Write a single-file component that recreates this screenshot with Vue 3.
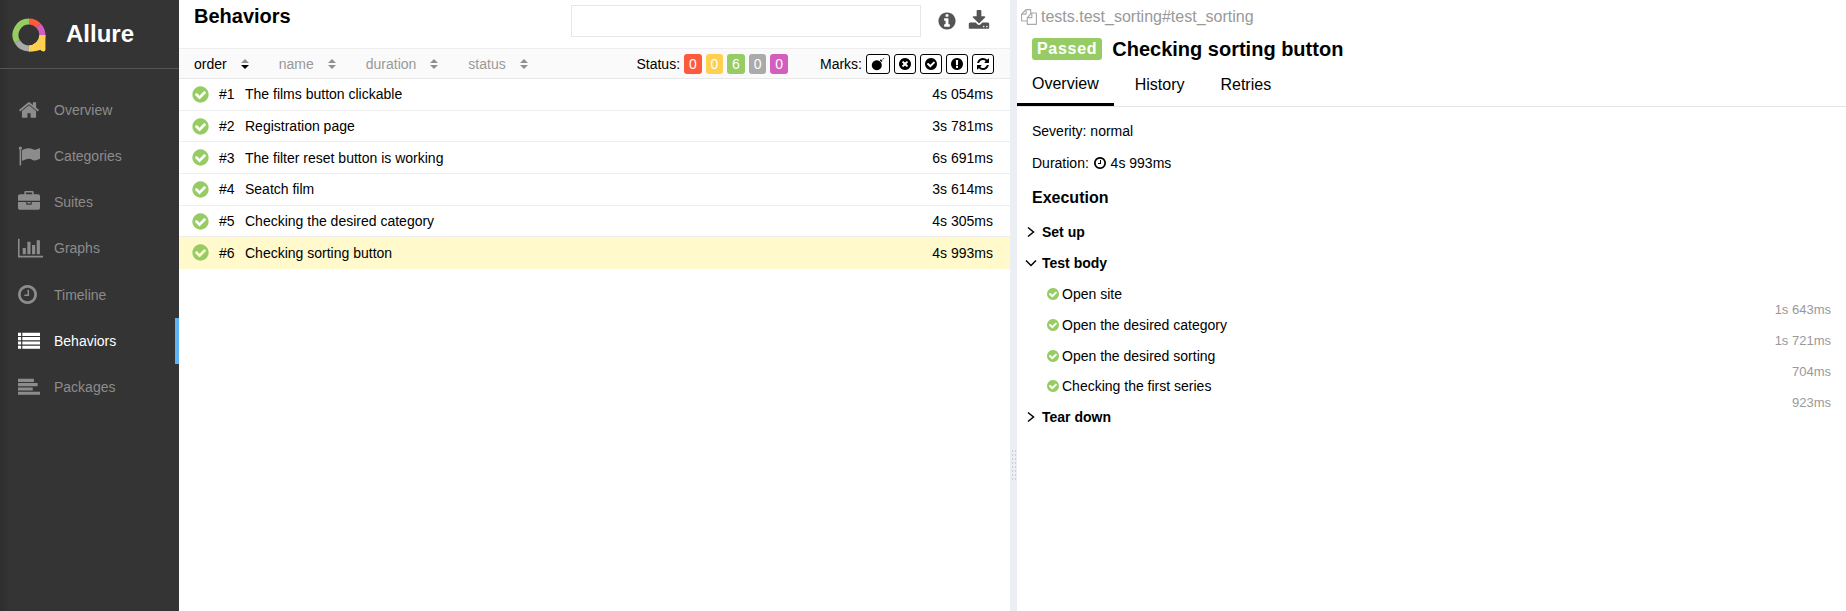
<template>
  <div class="app">
    <aside class="sidebar">
      <div class="brand">
        <svg class="logo" viewBox="0 0 36 36" width="34" height="34">
          <g fill="none" stroke-width="6.4">
            <path d="M18 3.800A14.200 14.200 0 0 1 28 8" stroke="#fd5a3e" />
            <path d="M28 8A14.200 14.200 0 0 1 32.200 18" stroke="#d35ebe" />
            <path d="M32.200 18A14.200 14.200 0 0 1 18 32.200" stroke="#ffd050" />
            <path d="M18 32.200A14.200 14.200 0 0 1 5.500 25" stroke="#aaa" />
            <path d="M5.500 25A14.200 14.200 0 0 1 18 3.800" stroke="#97cc64" />
          </g>
          <path d="M35.400 18V33.500Q35.400 35.400 33.500 35.400Q31 35.400 30 33.500Q26 35.400 18 35.400V29A11 11 0 0 0 29 18Z" fill="#ffd050" />
        </svg>
        <span class="brand-name">Allure</span>
      </div>
      <nav class="nav">
        <a v-for="item in navItems" :key="item.label" class="nav-item" :class="{ active: item.active }">
          <span class="nav-icon">
            <svg :viewBox="item.box" :width="item.w" :height="item.h" fill="currentColor">
              <path :d="item.path" />
            </svg>
          </span>
          <span>{{ item.label }}</span>
        </a>
      </nav>
    </aside>

    <main class="list-pane">
      <header class="list-head">
        <h2>Behaviors</h2>
        <div class="search"></div>
        <svg class="head-icon info" viewBox="0 0 1792 1792" width="20" height="20" fill="#555">
          <path :d="icons.info" />
        </svg>
        <svg class="head-icon" viewBox="0 0 1792 1792" width="22" height="22" fill="#555">
          <path :d="icons.download" />
        </svg>
      </header>

      <div class="toolbar">
        <div class="sorters">
          <span v-for="s in sorters" :key="s.label" class="sorter" :class="{ current: s.current }">
            {{ s.label }}
            <span class="arrows">
              <i class="up"></i>
              <i class="down"></i>
            </span>
          </span>
        </div>
        <div class="filters">
          <span class="filter-label">Status:</span>
          <span v-for="(b, i) in statuses" :key="i" class="count" :style="{ background: b.color }">{{ b.n }}</span>
          <span class="filter-label marks">Marks:</span>
          <span v-for="(m, i) in marks" :key="i" class="mark" :class="{ wide: i === 0 }">
            <svg viewBox="0 0 1792 1792" width="14" height="14" fill="#000">
              <path :d="m" />
            </svg>
          </span>
        </div>
      </div>

      <div
        v-for="row in rows"
        :key="row.order"
        class="row"
        :class="{ selected: row.order === 6 }"
      >
        <svg viewBox="0 0 1792 1792" width="19" height="19" fill="#97cc64">
          <path :d="icons.check" />
        </svg>
        <span class="row-order">#{{ row.order }}</span>
        <span class="row-name">{{ row.name }}</span>
        <span class="row-time">{{ row.time }}</span>
      </div>
    </main>

    <div class="divider">
      <span class="grip"></span>
    </div>

    <section class="detail">
      <div class="path">
        <svg viewBox="0 0 1792 1792" width="16" height="16" fill="#aaa">
          <path :d="icons.files" />
        </svg>
        <span>tests.test_sorting#test_sorting</span>
      </div>
      <div class="title">
        <span class="passed">Passed</span>
        <span>Checking sorting button</span>
      </div>
      <div class="tabs">
        <span class="tab on">Overview</span>
        <span class="tab">History</span>
        <span class="tab">Retries</span>
      </div>
      <div class="body">
        <p class="meta">Severity: normal</p>
        <p class="meta dur">
          Duration:
          <svg viewBox="0 0 1792 1792" width="14" height="14" fill="#000">
            <path :d="icons.clock" />
          </svg>
          4s 993ms
        </p>
        <h3>Execution</h3>

        <div class="stage">
          <span class="chev-box">
            <svg class="chev" viewBox="0 0 10 12" width="10" height="12"><path d="M3 1.500L8.500 6L3 10.500" /></svg>
          </span>
          Set up
        </div>
        <div class="stage">
          <span class="chev-box">
            <svg class="chev" viewBox="0 0 12 10" width="12" height="10"><path d="M1 2.500L6 7.500L11 2.500" /></svg>
          </span>
          Test body
        </div>
        <div class="steps">
          <div class="step-names">
            <div v-for="s in steps" :key="s.name" class="step">
              <svg viewBox="0 0 1792 1792" width="14" height="14" fill="#97cc64">
                <path :d="icons.check" />
              </svg>
              {{ s.name }}
            </div>
          </div>
          <div class="step-times">
            <div v-for="s in steps" :key="s.name" class="step-time">{{ s.time }}</div>
          </div>
        </div>
        <div class="stage">
          <span class="chev-box">
            <svg class="chev" viewBox="0 0 10 12" width="10" height="12"><path d="M3 1.500L8.500 6L3 10.500" /></svg>
          </span>
          Tear down
        </div>
      </div>
    </section>
  </div>
</template>

<script setup>
const icons = {
  check: "M1412 734q0-28-18-46l-91-90q-19-19-45-19t-45 19l-408 407-226-226q-19-19-45-19t-45 19l-91 90q-18 18-18 46 0 27 18 45l362 362q19 19 45 19 27 0 46-19l543-543q18-18 18-45zm252 162q0 209-103 385.500t-279.500 279.500-385.500 103-385.500-103-279.500-279.500-103-385.500 103-385.500 279.500-279.500 385.500-103 385.500 103 279.500 279.500 103 385.500z",
  info: "M1152 1376v-160q0-14-9-23t-23-9h-96v-512q0-14-9-23t-23-9h-320q-14 0-23 9t-9 23v160q0 14 9 23t23 9h96v320h-96q-14 0-23 9t-9 23v160q0 14 9 23t23 9h448q14 0 23-9t9-23zm-128-896v-160q0-14-9-23t-23-9h-192q-14 0-23 9t-9 23v160q0 14 9 23t23 9h192q14 0 23-9t9-23zm640 416q0 209-103 385.500t-279.500 279.500-385.500 103-385.500-103-279.500-279.500-103-385.500 103-385.500 279.500-279.500 385.500-103 385.500 103 279.500 279.500 103 385.500z",
  download: "M1344 1344q0-26-19-45t-45-19-45 19-19 45 19 45 45 19 45-19 19-45zm256 0q0-26-19-45t-45-19-45 19-19 45 19 45 45 19 45-19 19-45zm128-224v320q0 40-28 68t-68 28h-1472q-40 0-68-28t-28-68v-320q0-40 28-68t68-28h465l135 136q58 56 136 56t136-56l136-136h464q40 0 68 28t28 68zm-325-569q17 41-14 70l-448 448q-18 19-45 19t-45-19l-448-448q-31-29-14-70 17-39 59-39h256v-448q0-26 19-45t45-19h256q26 0 45 19t19 45v448h256q42 0 59 39z",
  clock: "M1024 544v448q0 14-9 23t-23 9h-320q-14 0-23-9t-9-23v-64q0-14 9-23t23-9h224v-352q0-14 9-23t23-9h64q14 0 23 9t9 23zm416 352q0-148-73-273t-198-198-273-73-273 73-198 198-73 273 73 273 198 198 273 73 273-73 198-198 73-273zm224 0q0 209-103 385.500t-279.500 279.500-385.500 103-385.500-103-279.500-279.500-103-385.500 103-385.500 279.500-279.500 385.500-103 385.500 103 279.500 279.500 103 385.500z",
  files: "M1696 384q40 0 68 28t28 68v1216q0 40-28 68t-68 28h-960q-40 0-68-28t-28-68v-288h-544q-40 0-68-28t-28-68v-672q0-40 20-88t48-76l408-408q28-28 76-48t88-20h416q40 0 68 28t28 68v328q68-40 128-40h416zm-544 213l-299 299h299v-299zm-640-384l-299 299h299v-299zm196 647l316-316v-416h-384v416q0 40-28 68t-68 28h-416v640h512v-256q0-40 20-88t48-76zm956 804v-1152h-384v416q0 40-28 68t-68 28h-416v640h896z",
};

const navItems = [
  { label: "Overview", box: "0 0 1792 1792", w: 22, h: 24, path: "M1472 992v480q0 26-19 45t-45 19h-384v-384h-256v384h-384q-26 0-45-19t-19-45v-480q0-1 .5-3t.5-3l575-474 575 474q1 2 1 6zm223-69l-62 74q-8 9-21 11h-3q-13 0-21-7l-692-577-692 577q-12 8-24 7-13-2-21-11l-62-74q-8-10-7-23.500t11-21.500l719-599q32-26 76-26t76 26l244 204v-195q0-14 9-23t23-9h192q14 0 23 9t9 23v408l219 182q10 8 11 21.500t-7 23.500z" },
  { label: "Categories", box: "0 0 1792 1792", w: 22, h: 24, path: "M320 256q0 72-64 110v1266q0 13-9.500 22.500t-22.500 9.500h-64q-13 0-22.500-9.500t-9.500-22.500v-1266q-64-38-64-110 0-53 37.500-90.500t90.500-37.500 90.500 37.500 37.500 90.500zm1472 64v763q0 25-12.500 38.500t-39.500 27.500q-215 116-369 116-61 0-123.500-22t-108.500-48-115.500-48-142.500-22q-192 0-464 146-17 9-33 9-26 0-45-19t-19-45v-742q0-32 31-55 21-14 79-43 236-120 421-120 107 0 200 29t219 88q38 19 88 19 54 0 117.500-21t110-47 88-47 54.500-21q26 0 45 19t19 45z" },
  { label: "Suites", box: "0 0 1792 1792", w: 22, h: 24, path: "M640 256h512v-128h-512v128zm1152 640v480q0 66-47 113t-113 47h-1472q-66 0-113-47t-47-113v-480h672v160q0 26 19 45t45 19h320q26 0 45-19t19-45v-160h672zm-768 0v128h-256v-128h256zm768-480v384h-1792v-384q0-66 47-113t113-47h352v-160q0-40 28-68t68-28h576q40 0 68 28t28 68v160h352q66 0 113 47t47 113z" },
  { label: "Graphs", box: "0 0 2048 1792", w: 25, h: 22, path: "M640 896v512h-256v-512h256zm384-512v1024h-256v-1024h256zm1024 1152v128h-2048v-1536h128v1408h1920zm-640-896v768h-256v-768h256zm384-384v1152h-256v-1152h256z" },
  { label: "Timeline", box: "128 128 1536 1536", w: 19, h: 19, path: icons.clock },
  { label: "Behaviors", active: true, box: "0 0 1792 1792", w: 22, h: 24, path: "M0 224h256v256H0zM352 224h1440v256H352zM0 576h256v256H0zM352 576h1440v256H352zM0 928h256v256H0zM352 928h1440v256H352zM0 1280h256v256H0zM352 1280h1440v256H352z" },
  { label: "Packages", box: "0 0 1792 1792", w: 22, h: 24, path: "M0 224h1300v256H0zM0 576h1600v256H0zM0 928h1200v256H0zM0 1280h1792v256H0z" },
];

const sorters = [
  { label: "order", current: true },
  { label: "name" },
  { label: "duration" },
  { label: "status" },
];

const statuses = [
  { n: 0, color: "#fd5a3e" },
  { n: 0, color: "#ffd050" },
  { n: 6, color: "#97cc64" },
  { n: 0, color: "#aaa" },
  { n: 0, color: "#d35ebe" },
];

const marks = [
  "M740 420a640 640 0 1 0 .1 0zM1130 420l210 210 130-130-210-210zM1450 290l210-210 50 50-210 210z",
  "M1277 1122q0-26-19-45l-181-181 181-181q19-19 19-45 0-27-19-46l-90-90q-19-19-46-19-26 0-45 19l-181 181-181-181q-19-19-45-19-27 0-46 19l-90 90q-19 19-19 46 0 26 19 45l181 181-181 181q-19 19-19 45 0 27 19 46l90 90q19 19 46 19 26 0 45-19l181-181 181 181q19 19 45 19 27 0 46-19l90-90q19-19 19-46zm387-226q0 209-103 385.500t-279.500 279.500-385.500 103-385.500-103-279.500-279.500-103-385.500 103-385.500 279.500-279.500 385.500-103 385.500 103 279.500 279.500 103 385.500z",
  icons.check,
  "M896 128q209 0 385.500 103t279.500 279.500 103 385.500-103 385.500-279.500 279.500-385.500 103-385.500-103-279.500-279.500-103-385.500 103-385.500 279.500-279.500 385.500-103zm128 1247v-190q0-14-9-23.500t-22-9.500h-192q-13 0-23 10t-10 23v190q0 13 10 23t23 10h192q13 0 22-9.500t9-23.500zm-2-344l18-621q0-12-10-18-10-8-24-8h-220q-14 0-24 8-10 6-10 18l17 621q0 10 10 17.500t24 7.500h185q14 0 23.500-7.500t10.500-17.500z",
  "M1639 1056q0 5-1 7-64 268-268 434.500t-478 166.500q-146 0-282.500-55t-243.500-157l-129 129q-19 19-45 19t-45-19-19-45v-448q0-26 19-45t45-19h448q26 0 45 19t19 45-19 45l-137 137q71 66 161 102t187 36q134 0 250-65t186-179q11-17 53-117 8-23 30-23h192q13 0 22.500 9.500t9.500 22.500zm25-800v448q0 26-19 45t-45 19h-448q-26 0-45-19t-19-45 19-45l138-138q-148-137-349-137-134 0-250 65t-186 179q-11 17-53 117-8 23-30 23h-199q-13 0-22.500-9.500t-9.500-22.500v-7q65-268 270-434.500t480-166.500q146 0 284 55.500t245 156.500l130-129q19-19 45-19t45 19 19 45z",
];

const rows = [
  { order: 1, name: "The films button clickable", time: "4s 054ms" },
  { order: 2, name: "Registration page", time: "3s 781ms" },
  { order: 3, name: "The filter reset button is working", time: "6s 691ms" },
  { order: 4, name: "Seatch film", time: "3s 614ms" },
  { order: 5, name: "Checking the desired category", time: "4s 305ms" },
  { order: 6, name: "Checking sorting button", time: "4s 993ms" },
];

const steps = [
  { name: "Open site", time: "1s 643ms" },
  { name: "Open the desired category", time: "1s 721ms" },
  { name: "Open the desired sorting", time: "704ms" },
  { name: "Checking the first series", time: "923ms" },
];
</script>

<style scoped>
.app {
  display: flex;
  height: 611px;
  overflow: hidden;
  font-family: "Liberation Sans", Arial, sans-serif;
  font-size: 14px;
  color: #000;
  background: #fff;
}

.sidebar {
  width: 179px;
  flex: none;
  background: linear-gradient(to right, #2e2e2e, #343434 10px);
}

.brand {
  display: flex;
  align-items: center;
  gap: 20px;
  height: 69px;
  padding-left: 12px;
  box-sizing: border-box;
  border-bottom: 1px solid #555;
  color: #fff;
}

.logo {
  flex: none;
  margin-top: 1px;
}

.brand-name {
  font-size: 24px;
  font-weight: 700;
}

.nav {
  padding-top: 17.400px;
}

.nav-item {
  display: flex;
  align-items: center;
  height: 46.300px;
  padding-left: 18px;
  color: #8c8c8c;
  font-size: 14px;
}

.nav-item.active {
  color: #fff;
  border-right: 4px solid #5eb3f6;
}

.nav-icon {
  display: flex;
  align-items: center;
  width: 36px;
  flex: none;
}

.list-pane {
  width: 831px;
  flex: none;
}

.list-head {
  display: flex;
  height: 49px;
  padding: 0 20px 0 15px;
  box-sizing: border-box;
  border-bottom: 1px solid #eee;
}

.list-head h2 {
  margin: 4px 0 0;
  font-size: 20px;
  font-weight: 700;
  line-height: 24px;
}

.search {
  width: 350px;
  height: 32px;
  margin: 5px 0 0 auto;
  border: 1px solid #e6e6e6;
  box-sizing: border-box;
}

.head-icon {
  margin: 10px 0 0 0;
}

.head-icon.info {
  margin: 11px 11px 0 16px;
}

.toolbar {
  display: flex;
  align-items: center;
  justify-content: space-between;
  height: 30px;
  padding: 0 16px 0 15px;
  box-sizing: border-box;
  background: #fafafa;
  border-bottom: 1px solid #e8e8e8;
}

.sorters {
  display: flex;
}

.sorter {
  display: flex;
  align-items: center;
  gap: 14px;
  margin-right: 30px;
  color: #999;
}

.sorter.current {
  color: #000;
}

.arrows {
  display: flex;
  flex-direction: column;
  gap: 2px;
}

.arrows i {
  display: block;
  width: 0;
  height: 0;
  border-left: 4px solid transparent;
  border-right: 4px solid transparent;
}

.arrows .up {
  border-bottom: 4px solid #8f8f8f;
}

.arrows .down {
  border-top: 4px solid #8f8f8f;
}

.sorter.current .down {
  border-top-color: #000;
}

.filters {
  display: flex;
  align-items: center;
  gap: 4px;
}

.filter-label.marks {
  margin-left: 28px;
}

.count {
  display: flex;
  align-items: center;
  justify-content: center;
  width: 17.600px;
  height: 20px;
  border-radius: 3px;
  color: #fff;
}

.mark {
  display: flex;
  align-items: center;
  justify-content: center;
  width: 22px;
  height: 20px;
  box-sizing: border-box;
  border: 1px solid #000;
  border-radius: 3px;
  background: #fff;
}

.mark.wide {
  width: 24px;
}

.row {
  display: flex;
  align-items: center;
  gap: 9px;
  height: 31.700px;
  padding: 0 17px 0 12px;
  box-sizing: border-box;
  border-bottom: 1px solid #eee;
}

.row.selected {
  background: #fff9cc;
  border-bottom-color: #fff9cc;
}

.row-order {
  width: 17px;
}

.row-time {
  margin-left: auto;
}

.divider {
  position: relative;
  width: 7px;
  flex: none;
  background: #ebeff3;
}

.grip {
  position: absolute;
  left: 1px;
  top: 449px;
  width: 6px;
  height: 32px;
  background-image: radial-gradient(#c9cdd1 1px, transparent 1px);
  background-size: 3px 4px;
}

.detail {
  flex: 1;
  min-width: 0;
}

.path {
  display: flex;
  align-items: center;
  gap: 4px;
  height: 34px;
  padding-left: 4px;
  font-size: 16px;
  color: #999;
}

.title {
  display: flex;
  align-items: center;
  gap: 10px;
  height: 30px;
  padding-left: 15px;
  font-size: 20px;
  font-weight: 700;
}

.passed {
  padding: 2px 5px;
  background: #97cc64;
  border-radius: 3px;
  color: #fff;
  font-size: 16px;
  letter-spacing: 0.7px;
}

.tabs {
  display: flex;
  height: 43px;
  box-sizing: border-box;
  border-bottom: 1px solid #e4e4e4;
  font-size: 16px;
}

.tab {
  display: flex;
  align-items: center;
  padding: 0 15px;
  margin-right: 6px;
  height: 42px;
  box-sizing: border-box;
}

.tab.on {
  border-bottom: 3px solid #000;
}

.body {
  padding: 8px 15px 0 15px;
}

.meta {
  margin: 0;
  height: 32px;
  line-height: 32px;
}

.meta svg {
  vertical-align: -2px;
}

.body h3 {
  margin: 0;
  font-size: 16px;
  line-height: 37px;
}

.stage {
  display: flex;
  align-items: center;
  height: 31px;
  font-weight: 700;
}

.chev-box {
  display: flex;
  align-items: center;
  width: 17px;
  margin-left: -7px;
  flex: none;
}

.chev {
  fill: none;
  stroke: #000;
  stroke-width: 1.500;
}

.steps {
  display: flex;
  justify-content: space-between;
  margin-top: 1px;
}

.step-names {
  padding-left: 14px;
}

.step {
  display: flex;
  align-items: center;
  gap: 2px;
  height: 30.700px;
}

.step-times {
  height: 0;
  padding-top: 15px;
  text-align: right;
}

.step-time {
  height: 31px;
  line-height: 31px;
  color: #999;
  font-size: 13px;
}
</style>
